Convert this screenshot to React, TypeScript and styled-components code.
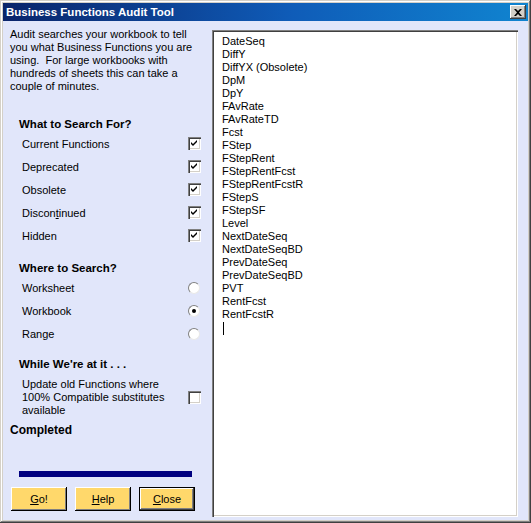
import React from "react";
import styled, { createGlobalStyle } from "styled-components";

const GlobalStyle = createGlobalStyle`
  html, body {
    margin: 0;
    padding: 0;
    background: #d4d0c8;
  }
  * {
    box-sizing: border-box;
  }
`;

const FONT = `"Liberation Sans", Arial, sans-serif`;

const Window = styled.div`
  width: 531px;
  height: 523px;
  padding: 3px;
  background: #d4d0c8;
  box-shadow: inset -1px -1px #404040, inset 1px 1px #d4d0c8,
    inset -2px -2px #808080, inset 2px 2px #ffffff;
  display: flex;
  flex-direction: column;
  font-family: ${FONT};
  font-size: 11px;
  color: #000;
`;

const TitleBar = styled.div`
  height: 18px;
  display: flex;
  align-items: center;
  justify-content: space-between;
  padding: 0 2px 0 3px;
  background: linear-gradient(to right, #0a246a 0%, #0f5cb8 55%, #1084d0 100%);
`;

const Title = styled.span`
  color: #fff;
  font-weight: bold;
  font-size: 11.5px;
`;

const CloseBox = styled.button`
  width: 16px;
  height: 14px;
  padding: 0;
  border: none;
  background: #d4d0c8;
  box-shadow: inset -1px -1px #404040, inset 1px 1px #ffffff,
    inset -2px -2px #808080;
  display: flex;
  align-items: center;
  justify-content: center;
`;

const Body = styled.div`
  flex: 1;
  display: flex;
  background: #e1e6fa;
`;

const LeftPanel = styled.div`
  width: 209px;
  padding: 7px 11px 0 7px;
  display: flex;
  flex-direction: column;
`;

const Intro = styled.p`
  margin: 0;
  line-height: 13px;
`;

const Heading = styled.div<{ $top: number }>`
  margin: ${(p) => p.$top}px 0 1px 9px;
  font-weight: bold;
  font-size: 11.5px;
  line-height: 13px;
`;

const Row = styled.label`
  height: 23px;
  margin-left: 12px;
  display: flex;
  align-items: center;
  justify-content: space-between;
`;

const Box = styled.span`
  width: 13px;
  height: 13px;
  background: #fff;
  box-shadow: inset 1px 1px #808080, inset 2px 2px #404040,
    inset -1px -1px #ffffff, inset -2px -2px #d4d0c8;
  display: flex;
  align-items: center;
  justify-content: center;
`;

const Radio = styled.span<{ $on?: boolean }>`
  width: 12px;
  height: 12px;
  margin-right: 1px;
  border-radius: 50%;
  background: #fff;
  border: 1px solid;
  border-color: #808080 #e8e8e8 #e8e8e8 #808080;
  display: flex;
  align-items: center;
  justify-content: center;

  &::after {
    content: "";
    width: 4px;
    height: 4px;
    border-radius: 50%;
    background: ${(p) => (p.$on ? "#000" : "transparent")};
  }
`;

const UpdateRow = styled.div`
  margin: 6px 0 0 12px;
  display: flex;
  align-items: center;
  justify-content: space-between;
`;

const UpdateText = styled.span`
  line-height: 13px;
`;

const Status = styled.div`
  margin-top: 6px;
  font-weight: bold;
  font-size: 12px;
  line-height: 14px;
`;

const Progress = styled.div`
  margin: 34px 0 0 9px;
  width: 173px;
  height: 6px;
  background: #000080;
`;

const Buttons = styled.div`
  margin: 10px 0 0 1px;
  display: flex;
  gap: 8px;
`;

const Button = styled.button<{ $default?: boolean }>`
  width: 56px;
  height: 24px;
  padding: 0;
  border: none;
  background: #ffd86b;
  font-family: ${FONT};
  font-size: 11px;
  color: #000;
  box-shadow: ${(p) =>
    p.$default
      ? "inset 0 0 0 1px #000, inset -2px -2px #404040, inset 2px 2px #ffffff, inset -3px -3px #808080"
      : "inset -1px -1px #000000, inset 1px 1px #ffffff, inset -2px -2px #808080"};
`;

const ListBox = styled.div`
  flex: 1;
  margin: 9px 10px 3px 0;
  background: #fff;
  padding: 5px 10px;
  box-shadow: inset 1px 1px #808080, inset 2px 2px #404040,
    inset -1px -1px #ffffff, inset -2px -2px #d4d0c8;
  line-height: 13px;
`;

const Item = styled.div``;

const Caret = styled.span`
  display: block;
  width: 1px;
  height: 13px;
  margin: 1px 0 0 1px;
  background: #000;
`;

const Check = () => (
  <svg width="7" height="7" viewBox="0 0 7 7">
    <path d="M0 2 L2 4 L6 0 L6 2 L2 6 L0 4 Z" fill="#000" />
  </svg>
);

const searchFor: React.ReactNode[] = [
  "Current Functions",
  "Deprecated",
  "Obsolete",
  <>
    Discon<u>t</u>inued
  </>,
  "Hidden",
];

const where = [
  { label: "Worksheet", on: false },
  { label: "Workbook", on: true },
  { label: "Range", on: false },
];

const functions = [
  "DateSeq",
  "DiffY",
  "DiffYX (Obsolete)",
  "DpM",
  "DpY",
  "FAvRate",
  "FAvRateTD",
  "Fcst",
  "FStep",
  "FStepRent",
  "FStepRentFcst",
  "FStepRentFcstR",
  "FStepS",
  "FStepSF",
  "Level",
  "NextDateSeq",
  "NextDateSeqBD",
  "PrevDateSeq",
  "PrevDateSeqBD",
  "PVT",
  "RentFcst",
  "RentFcstR",
];

export default function App() {
  return (
    <>
      <GlobalStyle />
      <Window>
        <TitleBar>
          <Title>Business Functions Audit Tool</Title>
          <CloseBox aria-label="Close">
            <svg width="8" height="7" viewBox="0 0 8 7">
              <path
                d="M0 0 L2 0 L4 2 L6 0 L8 0 L5 3.5 L8 7 L6 7 L4 5 L2 7 L0 7 L3 3.5 Z"
                fill="#000"
              />
            </svg>
          </CloseBox>
        </TitleBar>
        <Body>
          <LeftPanel>
            <Intro>
              Audit searches your workbook to tell
              <br />
              you what Business Functions you are
              <br />
              using.&nbsp; For large workbooks with
              <br />
              hundreds of sheets this can take a
              <br />
              couple of minutes.
            </Intro>

            <Heading $top={25}>What to Search For?</Heading>
            {searchFor.map((label, i) => (
              <Row key={i}>
                <span>{label}</span>
                <Box>
                  <Check />
                </Box>
              </Row>
            ))}

            <Heading $top={15}>Where to Search?</Heading>
            {where.map((w) => (
              <Row key={w.label}>
                <span>{w.label}</span>
                <Radio $on={w.on} />
              </Row>
            ))}

            <Heading $top={13}>While We're at it . . .</Heading>
            <UpdateRow>
              <UpdateText>
                Update old Functions where
                <br />
                100% Compatible substitutes
                <br />
                available
              </UpdateText>
              <Box />
            </UpdateRow>

            <Status>Completed</Status>
            <Progress />

            <Buttons>
              <Button>
                <u>G</u>o!
              </Button>
              <Button>
                <u>H</u>elp
              </Button>
              <Button $default>
                <u>C</u>lose
              </Button>
            </Buttons>
          </LeftPanel>

          <ListBox>
            {functions.map((f) => (
              <Item key={f}>{f}</Item>
            ))}
            <Caret />
          </ListBox>
        </Body>
      </Window>
    </>
  );
}
